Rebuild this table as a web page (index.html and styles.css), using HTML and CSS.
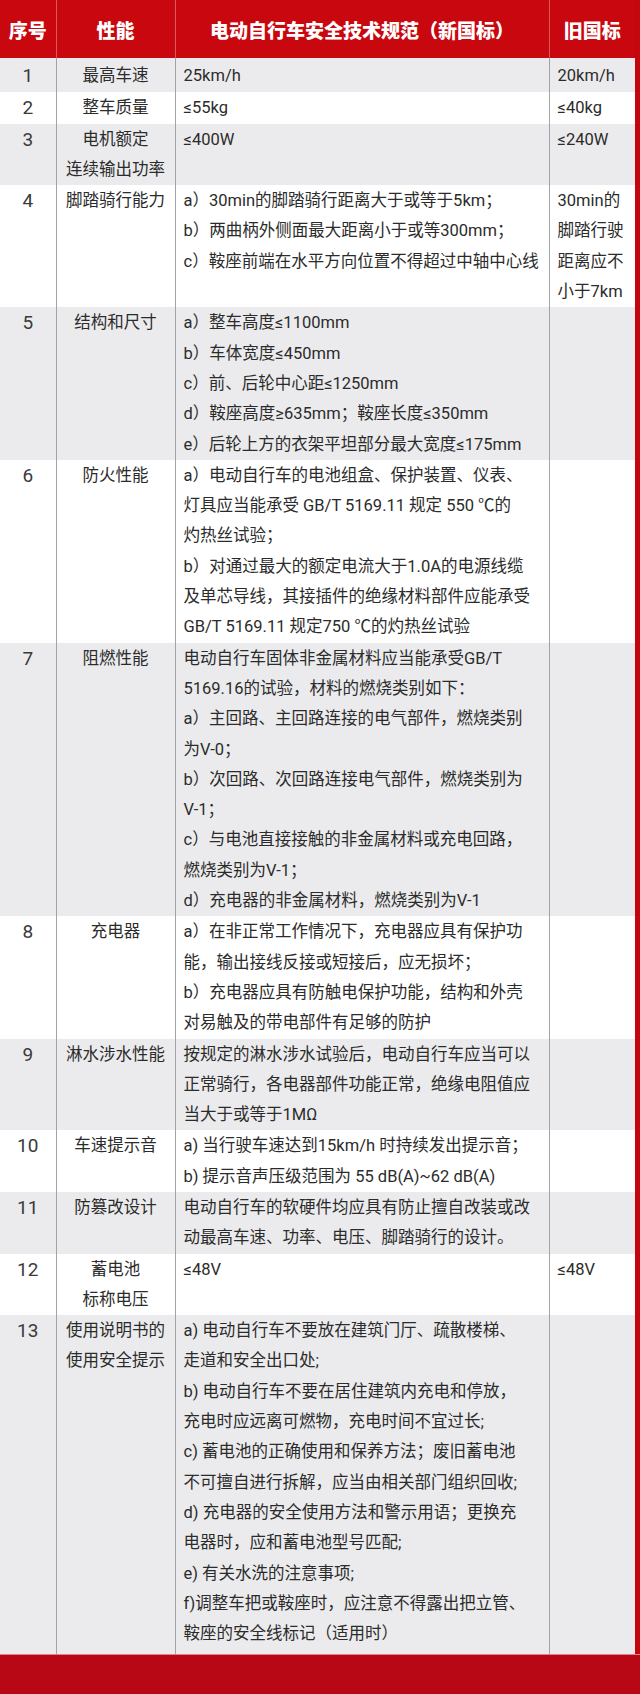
FILE: index.html
```html
<!DOCTYPE html>
<html lang="zh-CN">
<head>
<meta charset="utf-8">
<title>电动自行车安全技术规范</title>
<link rel="stylesheet" href="styles.css">
</head>
<body>
<div class="sheet">
  <table class="spec">
    <colgroup>
      <col class="c-no"><col class="c-name"><col class="c-new"><col class="c-old">
    </colgroup>
    <thead>
      <tr>
        <th>序号</th>
        <th>性能</th>
        <th>电动自行车安全技术规范（新国标）</th>
        <th>旧国标</th>
      </tr>
    </thead>
    <tbody>
      <tr class="odd first">
        <td class="no">1</td><td class="name">最高车速</td>
        <td class="txt">25km/h</td><td class="txt">20km/h</td>
      </tr>
      <tr class="even">
        <td class="no">2</td><td class="name">整车质量</td>
        <td class="txt">≤55kg</td><td class="txt">≤40kg</td>
      </tr>
      <tr class="odd">
        <td class="no">3</td><td class="name">电机额定<br>连续输出功率</td>
        <td class="txt">≤400W</td><td class="txt">≤240W</td>
      </tr>
      <tr class="even">
        <td class="no">4</td><td class="name">脚踏骑行能力</td>
        <td class="txt">a）30min的脚踏骑行距离大于或等于5km；<br>b）两曲柄外侧面最大距离小于或等300mm；<br>c）鞍座前端在水平方向位置不得超过中轴中心线</td>
        <td class="txt">30min的<br>脚踏行驶<br>距离应不<br>小于7km</td>
      </tr>
      <tr class="odd">
        <td class="no">5</td><td class="name">结构和尺寸</td>
        <td class="txt">a）整车高度≤1100mm<br>b）车体宽度≤450mm<br>c）前、后轮中心距≤1250mm<br>d）鞍座高度≥635mm；鞍座长度≤350mm<br>e）后轮上方的衣架平坦部分最大宽度≤175mm</td>
        <td class="txt"></td>
      </tr>
      <tr class="even">
        <td class="no">6</td><td class="name">防火性能</td>
        <td class="txt">a）电动自行车的电池组盒、保护装置、仪表、<br>灯具应当能承受 GB/T 5169.11 规定 550 ℃的<br>灼热丝试验；<br>b）对通过最大的额定电流大于1.0A的电源线缆<br>及单芯导线，其接插件的绝缘材料部件应能承受<br>GB/T 5169.11 规定750 ℃的灼热丝试验</td>
        <td class="txt"></td>
      </tr>
      <tr class="odd">
        <td class="no">7</td><td class="name">阻燃性能</td>
        <td class="txt">电动自行车固体非金属材料应当能承受GB/T<br>5169.16的试验，材料的燃烧类别如下：<br>a）主回路、主回路连接的电气部件，燃烧类别<br>为V-0；<br>b）次回路、次回路连接电气部件，燃烧类别为<br>V-1；<br>c）与电池直接接触的非金属材料或充电回路，<br>燃烧类别为V-1；<br>d）充电器的非金属材料，燃烧类别为V-1</td>
        <td class="txt"></td>
      </tr>
      <tr class="even">
        <td class="no">8</td><td class="name">充电器</td>
        <td class="txt">a）在非正常工作情况下，充电器应具有保护功<br>能，输出接线反接或短接后，应无损坏；<br>b）充电器应具有防触电保护功能，结构和外壳<br>对易触及的带电部件有足够的防护</td>
        <td class="txt"></td>
      </tr>
      <tr class="odd">
        <td class="no">9</td><td class="name">淋水涉水性能</td>
        <td class="txt">按规定的淋水涉水试验后，电动自行车应当可以<br>正常骑行，各电器部件功能正常，绝缘电阻值应<br>当大于或等于1MΩ</td>
        <td class="txt"></td>
      </tr>
      <tr class="even">
        <td class="no">10</td><td class="name">车速提示音</td>
        <td class="txt">a) 当行驶车速达到15km/h 时持续发出提示音；<br>b) 提示音声压级范围为 55 dB(A)~62 dB(A)</td>
        <td class="txt"></td>
      </tr>
      <tr class="odd">
        <td class="no">11</td><td class="name">防篡改设计</td>
        <td class="txt">电动自行车的软硬件均应具有防止擅自改装或改<br>动最高车速、功率、电压、脚踏骑行的设计。</td>
        <td class="txt"></td>
      </tr>
      <tr class="even">
        <td class="no">12</td><td class="name">蓄电池<br>标称电压</td>
        <td class="txt">≤48V</td><td class="txt">≤48V</td>
      </tr>
      <tr class="odd last">
        <td class="no">13</td><td class="name">使用说明书的<br>使用安全提示</td>
        <td class="txt">a) 电动自行车不要放在建筑门厅、疏散楼梯、<br>走道和安全出口处;<br>b) 电动自行车不要在居住建筑内充电和停放，<br>充电时应远离可燃物，充电时间不宜过长;<br>c) 蓄电池的正确使用和保养方法；废旧蓄电池<br>不可擅自进行拆解，应当由相关部门组织回收;<br>d) 充电器的安全使用方法和警示用语；更换充<br>电器时，应和蓄电池型号匹配;<br>e) 有关水洗的注意事项;<br>f)调整车把或鞍座时，应注意不得露出把立管、<br>鞍座的安全线标记（适用时）</td>
        <td class="txt"></td>
      </tr>
    </tbody>
  </table>
  <div class="footer"></div>
</div>
</body>
</html>
```
FILE: styles.css
```css
html, body {
  margin: 0;
  padding: 0;
  background: #b80715;
}

.sheet {
  width: 640px;
  background: #c4060f;
}

.spec {
  width: 635px;
  border-collapse: collapse;
  table-layout: fixed;
  font-family: "Roboto", "Noto Sans CJK SC", sans-serif;
  color: #2b2b2b;
}

.c-no { width: 56px; }
.c-name { width: 119px; }
.c-new { width: 374px; }
.c-old { width: 86px; }

.spec th {
  height: 58px;
  padding: 0;
  background: #c8070f;
  color: #ffffff;
  font-family: "Noto Sans CJK SC", sans-serif;
  font-weight: 900;
  font-size: 19px;
  text-align: center;
  vertical-align: middle;
  white-space: nowrap;
}

.spec th + th {
  border-left: 1px solid #d9565b;
}

.spec td {
  padding: 1px 0 0 0;
  font-size: 16.5px;
  line-height: 30.3px;
  vertical-align: top;
  white-space: nowrap;
}

.spec td + td {
  border-left: 1px solid #a3a3a6;
}

.odd td { background: #ebebed; }
.even td { background: #ffffff; }

.first td { padding-top: 3px; padding-bottom: 1px; }
.last td { padding-bottom: 5px; }

.no {
  text-align: center;
  font-size: 19px !important;
  color: #3a3a3a;
}

.name {
  text-align: center;
}

.txt {
  padding-left: 8px !important;
}

.footer {
  height: 34px;
  background: #b80715;
  border-top: 1px solid #d8868c;
}
```
